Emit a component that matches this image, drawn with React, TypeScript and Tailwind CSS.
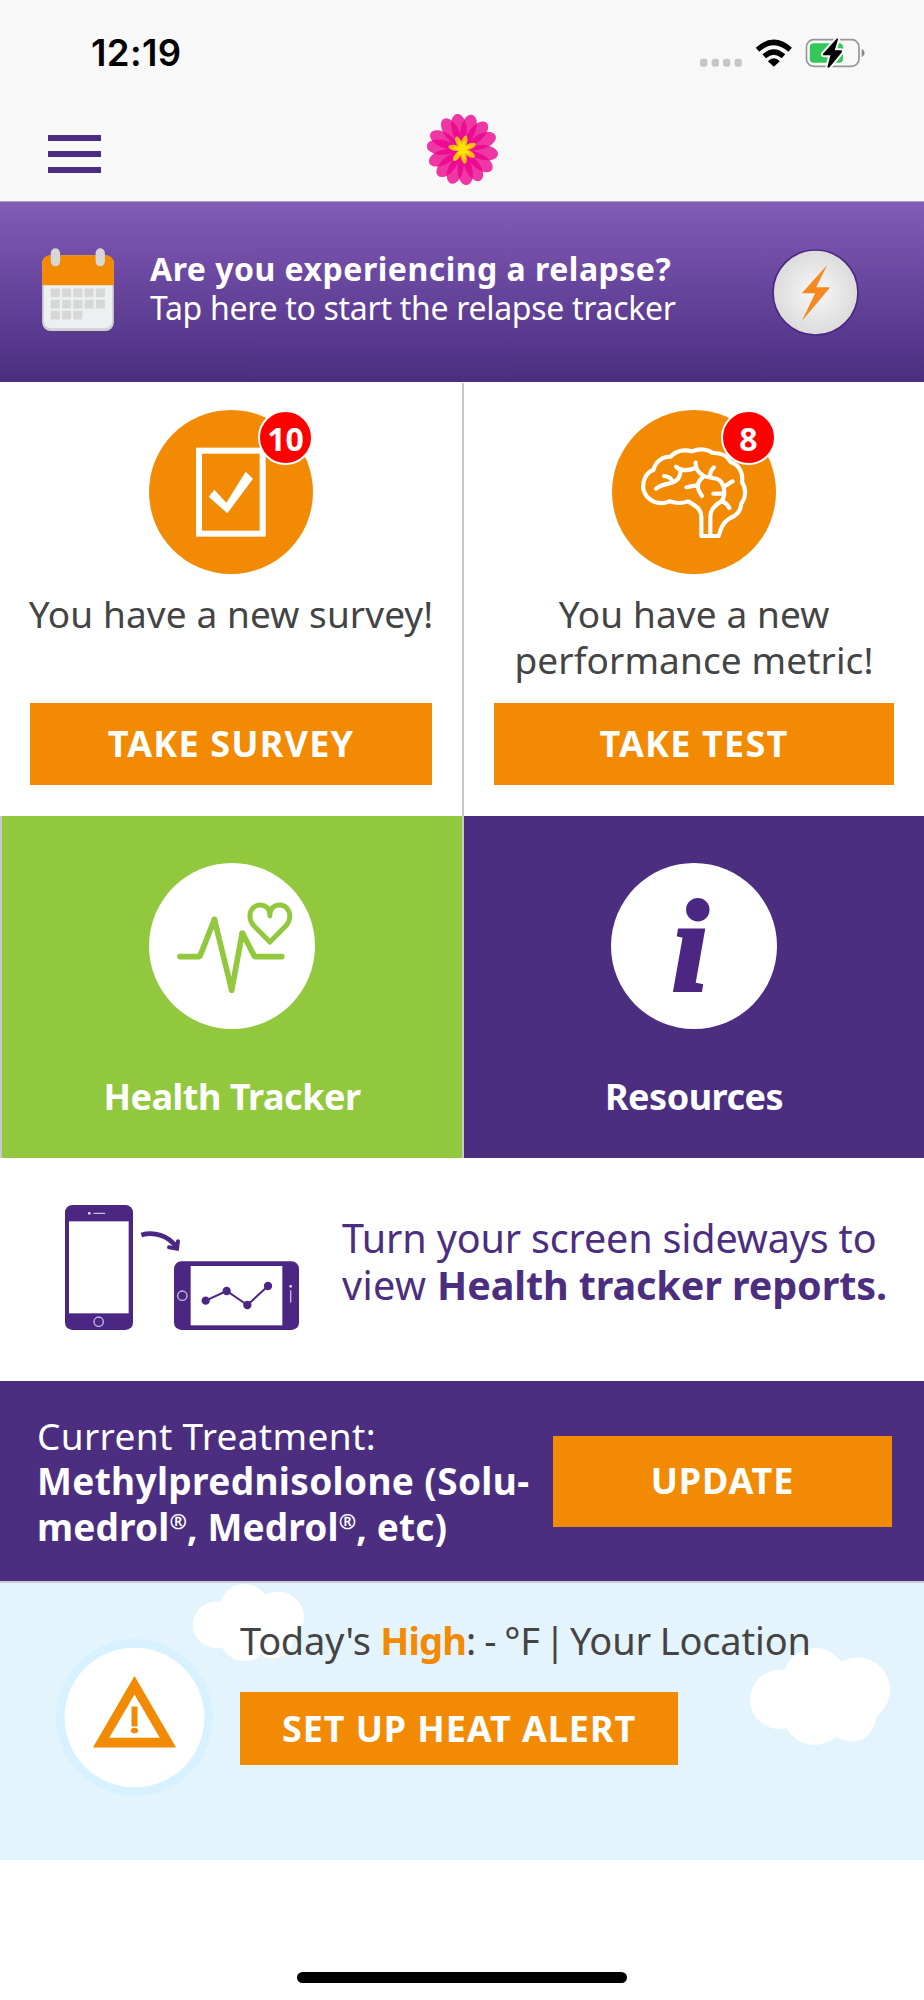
import type { ReactNode } from "react";

// ------------------ Types ------------------
interface TaskCardProps {
  icon: ReactNode;
  count: number;
  message: ReactNode;
  action: string;
  className?: string;
}

interface TileProps {
  icon: ReactNode;
  label: string;
  className: string;
}

// ------------------ Icons ------------------
const PETALS = [16, 42, 67, 98, 125, 150, 173, 199, 223, 248, 276, 297, 328, 351];
const STAMENS = [14, 67, 121, 170, 219, 282, 333];

const FlowerLogo = () => (
  <svg viewBox="-106 -106 212 212" className="size-[71px]">
    {PETALS.map((deg) => (
      <path
        key={deg}
        d="M0 0C-18 -30 -27 -60 -20 -86C-15 -103 -6 -107 0 -107C6 -107 15 -103 20 -86C27 -60 18 -30 0 0Z"
        fill="#ec008c"
        fillOpacity="0.78"
        transform={`rotate(${deg})`}
      />
    ))}
    {STAMENS.map((deg) => (
      <ellipse key={deg} cx="0" cy="-23" rx="8.5" ry="20" fill="#fdb913" transform={`rotate(${deg})`} />
    ))}
    {STAMENS.map((deg) => (
      <path key={deg} d="M-8 0L0 -30L8 0Z" fill="#ffe600" transform={`rotate(${deg})`} />
    ))}
  </svg>
);

const StatusIcons = () => (
  <svg viewBox="714 112 496 90" className="h-[30px] w-[165px]">
    {[714, 749, 783, 818].map((x) => (
      <rect key={x} x={x} y="174" width="22" height="24" rx="8" fill="#c6c6c6" />
    ))}
    <g fill="none" stroke="#000" strokeWidth="16">
      <path d="M887 147Q936 103 985 147" />
      <path d="M907 167Q936 141 965 167" />
    </g>
    <path d="M918 182Q936 164 954 182L936 198Z" />
    <rect x="1034" y="117" width="158" height="80" rx="22" fill="none" stroke="#969696" strokeWidth="5" />
    <path d="M1200 144Q1209 149 1209 157Q1209 165 1200 170Z" fill="#8a8a8a" />
    <rect x="1044" y="128" width="100" height="58" rx="12" fill="#34c759" />
    <path
      d="M1126 113L1084 159Q1082 164 1087 164H1106L1097 199Q1100 203 1104 199L1141 154Q1142 149 1137 149H1119L1129 116Z"
      stroke="#f8f8f8"
      strokeWidth="12"
      paintOrder="stroke"
    />
  </svg>
);

const CalendarIcon = () => (
  <svg viewBox="126 174 216 250" className="h-[83px] w-[72px]">
    <rect x="126" y="196" width="216" height="228" rx="26" fill="#cfd1d1" />
    <rect x="131" y="200" width="206" height="216" rx="22" fill="#ecf0f1" />
    <path d="M126 286V222Q126 196 152 196H316Q342 196 342 222V286Z" fill="#f28a04" />
    <rect x="152" y="175" width="28" height="54" rx="14" fill="#d7d7d7" />
    <rect x="287" y="175" width="28" height="54" rx="14" fill="#d7d7d7" />
    {[296, 330, 363].map((y, row) =>
      [152, 186, 220, 254, 288]
        .slice(0, row === 2 ? 3 : 5)
        .map((x) => <rect key={`${x}-${y}`} x={x} y={y} width="27" height="26" fill="#d7d7d7" />)
    )}
  </svg>
);

const BoltIcon = () => (
  <svg viewBox="930 176 260 260" className="size-[87px]">
    <defs>
      <radialGradient id="bolt-bg">
        <stop offset="0" stopColor="#f8f8f8" />
        <stop offset="1" stopColor="#dbdbdb" />
      </radialGradient>
    </defs>
    <circle cx="1060" cy="306" r="127" fill="url(#bolt-bg)" stroke="#4b2783" strokeWidth="5" />
    <path d="M1095 224L1019 308H1059L1019 392L1104 290H1062Z" fill="#f5891f" />
  </svg>
);

const SurveyIcon = () => (
  <svg viewBox="447 88 492 492" className="size-[164px]">
    <circle cx="693" cy="334" r="246" fill="#f28a04" />
    <rect x="597" y="210" width="191" height="249" fill="none" stroke="#fff" strokeWidth="18" />
    <path d="M626 348L643 327L679 366L737 273L759 294L682 398Z" fill="#fff" />
  </svg>
);

const BrainIcon = () => (
  <svg viewBox="450 88 492 492" className="size-[164px]">
    <circle cx="696" cy="334" r="246" fill="#f28a04" />
    <g fill="none" stroke="#fff" strokeWidth="12.5" strokeLinecap="round" strokeLinejoin="round">
      <path
        strokeLinecap="butt"
        d="M718 466V408C718 384 700 375 678 362Q652 372 622 362C590 376 552 360 544 325C541 300 552 276 574 268C580 244 600 228 626 228C640 212 664 205 690 212C714 202 738 206 752 217C780 216 798 228 806 244C834 254 844 280 840 305C853 322 852 352 838 368C836 396 820 406 800 415C782 426 776 445 770 466Z"
      />
      <path d="M745 466V408C745 385 760 372 778 362C792 345 788 318 776 302C764 288 742 294 726 286C708 276 700 264 701 246" />
      <path d="M582 324C592 316 606 311 622 308C648 302 655 290 656 268" />
      <path d="M606 286C624 288 630 296 633 304" />
      <path d="M642 258C652 270 676 272 700 262" />
      <path d="M756 260C746 268 744 276 744 288" />
      <path d="M722 290C710 300 706 312 708 322C710 334 716 338 720 346" />
      <path d="M673 320C684 320 688 314 706 315" />
      <path d="M812 302C802 304 800 314 786 316" />
      <path d="M754 339C762 340 768 338 786 339" />
      <path d="M784 364C794 368 798 374 802 382" />
    </g>
  </svg>
);

const HealthIcon = () => (
  <svg viewBox="447 159 500 500" className="size-[166px]">
    <circle cx="697" cy="409" r="250" fill="#fff" />
    <g fill="none" stroke="#92c83e" strokeLinecap="round">
      <path
        d="M540 441H600L644 329L696 542L728 369L765 441H847"
        strokeWidth="17"
        strokeLinejoin="bevel"
      />
      <path
        d="M811 319V313C811 276 751 275 751 319C751 333 756 341 762 347L811 397L860 347C866 341 871 333 871 319C871 275 811 276 811 313"
        strokeWidth="15"
        strokeLinejoin="round"
      />
    </g>
    <g fill="#92c83e">
      <circle cx="644" cy="329" r="8.5" />
      <circle cx="696" cy="542" r="8.5" />
      <circle cx="728" cy="370" r="8.5" />
    </g>
  </svg>
);

const InfoIcon = () => (
  <div className="flex size-[166px] items-center justify-center rounded-full bg-white">
    <span className="mr-[8px] font-['Liberation_Serif',serif] text-[130px] leading-none font-bold text-[#4b2783] italic [-webkit-text-stroke:4px_#4b2783]">
      i
    </span>
  </div>
);

const RotatePhoneIcon = () => (
  <svg viewBox="195 135 702 375" className="h-[125px] w-[234px] shrink-0">
    <rect x="195" y="135" width="204" height="375" rx="22" fill="#4b2783" />
    <rect x="207" y="184" width="179" height="276" fill="#fff" />
    <g fill="none" stroke="#c9bcdb" strokeWidth="4" strokeLinecap="round">
      <path d="M282 160H314" />
      <circle cx="296" cy="485" r="14" />
    </g>
    <circle cx="268" cy="160" r="4" fill="#e6dfef" />
    <path d="M424 225C462 214 504 226 530 262" fill="none" stroke="#4b2783" strokeWidth="14" />
    <path d="M507 262L531 266L534 244" fill="none" stroke="#4b2783" strokeWidth="12" strokeLinecap="round" />

    <rect x="522" y="304" width="375" height="206" rx="22" fill="#4b2783" />
    <rect x="572" y="318" width="275" height="178" fill="#fff" />
    <g fill="none" stroke="#c9bcdb" strokeWidth="4" strokeLinecap="round">
      <path d="M872 392V426" />
      <circle cx="547" cy="407" r="14" />
    </g>
    <circle cx="872" cy="379" r="4" fill="#e6dfef" />
    <path d="M617 422L680 393L742 435L804 378" fill="none" stroke="#4b2783" strokeWidth="6" />
    <g fill="#4b2783">
      <circle cx="617" cy="422" r="12.5" />
      <circle cx="680" cy="393" r="12.5" />
      <circle cx="742" cy="435" r="12.5" />
      <circle cx="804" cy="378" r="12.5" />
    </g>
  </svg>
);

const AlertIcon = () => (
  <svg viewBox="166 805 472 472" className="size-[157px] shrink-0">
    <circle cx="402" cy="1041" r="236" fill="#d8f1fe" />
    <circle cx="402" cy="1041" r="210" fill="#fff" />
    <path d="M402 916L527 1131H277ZM402 972L326 1102H478Z" fill="#f28a04" fillRule="evenodd" />
    <rect x="393" y="1008" width="18" height="60" fill="#f28a04" />
    <ellipse cx="402" cy="1080" rx="11" ry="8.5" fill="#f28a04" />
  </svg>
);

const Cloud = ({ className }: { className: string }) => (
  <svg viewBox="0 0 140 97" className={className} fill="#fff">
    <circle cx="29.5" cy="51.5" r="29.5" />
    <circle cx="65" cy="32" r="32" />
    <circle cx="107.5" cy="42" r="32.5" />
    <circle cx="65" cy="65" r="32" />
    <circle cx="101" cy="68.5" r="25" />
  </svg>
);

// ------------------ Sections ------------------
const TaskCard = ({ icon, count, message, action, className = "" }: TaskCardProps) => (
  <div className={`flex flex-col items-center px-[30px] pt-[27px] ${className}`}>
    <div className="relative">
      {icon}
      <span className="absolute top-0 right-0 flex size-[55px] items-center justify-center rounded-full border-2 border-white bg-[#ff0000] pt-[3px] text-[32px] leading-none font-bold text-white">
        {count}
      </span>
    </div>
    <p className="mt-[17px] h-[91px] text-center text-[37px] leading-[45.5px] tracking-[0.1px] whitespace-nowrap text-[#444]">
      {message}
    </p>
    <button
      type="button"
      className="mt-[21px] h-[82px] w-full bg-[#f28a04] text-[36px] leading-none font-bold tracking-[1.2px] text-white"
    >
      {action}
    </button>
  </div>
);

const Tile = ({ icon, label, className }: TileProps) => (
  <div className={`flex flex-col items-center border-l-2 border-[#c8c8c8] pt-[47px] text-white ${className}`}>
    {icon}
    <p className="mt-[45px] text-[36px] leading-[46px] font-bold tracking-[-0.5px]">{label}</p>
  </div>
);

const Reg = () => <span className="align-[12px] text-[21px] leading-none">®</span>;

// ------------------ Component ------------------
const App = () => {
  return (
    <div className="flex h-[2000px] w-[924px] flex-col overflow-hidden bg-white font-['Noto_Sans',sans-serif]">
      {/* Status bar + nav */}
      <header className="h-[202px] shrink-0 border-b border-[#aaa3b5] bg-[#f8f8f8]">
        <div className="flex h-[106px] items-center justify-between pr-[59px] pl-[91px]">
          <span className="font-['Inter',sans-serif] text-[36.5px] leading-none font-semibold tracking-[0.4px]">
            12:19
          </span>
          <StatusIcons />
        </div>
        <div className="grid h-[95px] grid-cols-3 items-center">
          <button type="button" aria-label="Menu" className="ml-[48px] flex w-[53px] flex-col gap-[10px]">
            <span className="h-[6px] bg-[#4b2e83]" />
            <span className="h-[6px] bg-[#4b2e83]" />
            <span className="h-[6px] bg-[#4b2e83]" />
          </button>
          <div className="mb-[9px] flex justify-center">
            <FlowerLogo />
          </div>
        </div>
      </header>

      {/* Relapse banner */}
      <section className="flex h-[180px] shrink-0 items-center bg-linear-to-b from-[#835bb8] to-[#4b2e80] pr-[65px] pl-[42px] text-white">
        <div className="mb-[5px]">
          <CalendarIcon />
        </div>
        <div className="mb-[8px] ml-[36px] text-[32px] leading-[39px] whitespace-nowrap">
          <p className="font-bold tracking-[0.5px]">Are you experiencing a relapse?</p>
          <p className="tracking-[-0.3px]">Tap here to start the relapse tracker</p>
        </div>
        <div className="ml-auto">
          <BoltIcon />
        </div>
      </section>

      {/* Survey / performance test */}
      <section className="mt-px grid h-[433px] shrink-0 grid-cols-2">
        <TaskCard icon={<SurveyIcon />} count={10} message="You have a new survey!" action="TAKE SURVEY" />
        <TaskCard
          icon={<BrainIcon />}
          count={8}
          message={
            <>
              You have a new
              <br />
              performance metric!
            </>
          }
          action="TAKE TEST"
          className="border-l-2 border-[#c8c8c8]"
        />
      </section>

      {/* Shortcuts */}
      <section className="grid h-[342px] shrink-0 grid-cols-2">
        <Tile icon={<HealthIcon />} label="Health Tracker" className="bg-[#92c83e]" />
        <Tile icon={<InfoIcon />} label="Resources" className="bg-[#4b2e80]" />
      </section>

      {/* Landscape hint */}
      <section className="flex h-[223px] shrink-0 items-center pl-[65px] text-[#4b2e80]">
        <div className="mb-[4px]">
          <RotatePhoneIcon />
        </div>
        <p className="mb-[15px] ml-[43px] text-[39.5px] leading-[47.5px] whitespace-nowrap">
          <span className="tracking-[-0.15px]">Turn your screen sideways to</span>
          <br />
          <span className="tracking-[0.4px]">view </span>
          <b className="tracking-[-0.1px]">Health tracker reports.</b>
        </p>
      </section>

      {/* Current treatment */}
      <section className="flex h-[200px] shrink-0 items-center justify-between bg-[#4b2e80] pr-[32px] pl-[37px] text-white">
        <p className="text-[37px] leading-[45.5px] tracking-[0.35px] whitespace-nowrap">
          Current Treatment:
          <br />
          <b>Methylprednisolone (Solu-</b>
          <br />
          <b className="tracking-[0.15px]">
            medrol
            <Reg />, Medrol
            <Reg />, etc)
          </b>
        </p>
        <button
          type="button"
          className="h-[91px] w-[339px] bg-[#f28a04] text-[36px] leading-none font-bold tracking-[0.8px]"
        >
          UPDATE
        </button>
      </section>

      {/* Heat alert */}
      <section className="relative flex h-[279px] shrink-0 border-t-2 border-[#cccad0] bg-[#e4f4fd] pl-[56px]">
        <Cloud className="absolute top-[1px] left-[193px] h-[77px] w-[111px]" />
        <Cloud className="absolute top-[65px] left-[750px] h-[97px] w-[140px]" />
        <div className="mt-[56px]">
          <AlertIcon />
        </div>
        <div className="relative mt-[34px] ml-[27px]">
          <p className="text-[38px] leading-[46px] tracking-[-0.3px] whitespace-nowrap text-[#444]">
            Today's <b className="tracking-[-0.8px] text-[#f28a04]">High</b>
            <span className="tracking-[-1px]">: - </span>
            <span className="tracking-[-0.2px] [word-spacing:-5px]">°F | Your </span>
            <span className="ml-[4px] tracking-[-0.15px]">Location</span>
          </p>
          <button
            type="button"
            className="mt-[29px] h-[73px] w-[438px] bg-[#f28a04] text-[36px] leading-none font-bold tracking-[0.9px] text-white"
          >
            SET UP HEAT ALERT
          </button>
        </div>
      </section>

      {/* Home indicator */}
      <div className="mt-auto mb-[17px] h-[11px] w-[330px] self-center rounded-full bg-black" />
    </div>
  );
};

export default App;
